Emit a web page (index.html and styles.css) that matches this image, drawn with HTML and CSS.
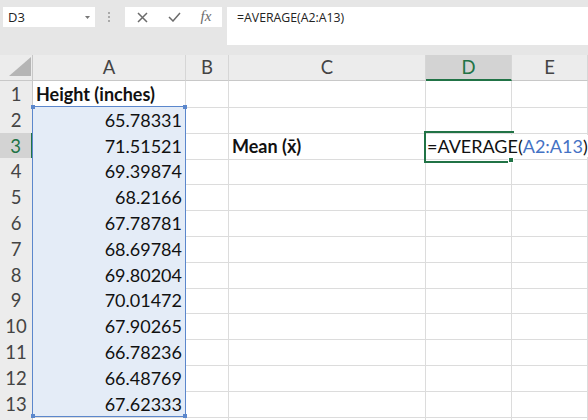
FILE: index.html
```html
<!DOCTYPE html>
<html>
<head>
  <title>Mean height</title>
  <link rel="stylesheet" href="styles.css">
</head>
<body>

  <div class="toolbar">
    <div class="name-box">
      <span>D3</span>
      <svg class="caret" width="5" height="3" viewBox="0 0 5 3"><path d="M0 0h5L2.5 3z"/></svg>
    </div>

    <div class="grip"><i></i><i></i><i></i></div>

    <div class="buttons">
      <span class="btn">
        <svg width="11" height="11" viewBox="0 0 11 11"><path d="M1 1l9 9M10 1l-9 9"/></svg>
      </span>
      <span class="btn">
        <svg width="13" height="10" viewBox="0 0 13 10"><path d="M1 5l4 4 7-8"/></svg>
      </span>
      <span class="btn fx">fx</span>
    </div>

    <div class="formula">=AVERAGE(A2:A13)</div>
  </div>

  <div class="sheet">

    <div class="row head">
      <div class="corner">
        <svg width="22" height="19" viewBox="0 0 22 19"><path d="M0 19H22V0z"/></svg>
      </div>
      <div class="col">A</div>
      <div class="col">B</div>
      <div class="col">C</div>
      <div class="col on">D</div>
      <div class="col">E</div>
    </div>

    <div class="row">
      <div class="num">1</div>
      <div class="cell bold">Height (inches)</div>
      <div class="cell"></div>
      <div class="cell"></div>
      <div class="cell"></div>
      <div class="cell"></div>
    </div>

    <div class="row">
      <div class="num">2</div>
      <div class="cell value ref">65.78331</div>
      <div class="cell"></div>
      <div class="cell"></div>
      <div class="cell"></div>
      <div class="cell"></div>
    </div>

    <div class="row">
      <div class="num on">3</div>
      <div class="cell value ref">71.51521</div>
      <div class="cell"></div>
      <div class="cell bold">Mean (x̄)</div>
      <div class="cell active">
        <span class="editor">=AVERAGE(<span class="ref-text">A2:A13</span>)</span>
        <i class="fill-handle"></i>
      </div>
      <div class="cell"></div>
    </div>

    <div class="row">
      <div class="num">4</div>
      <div class="cell value ref">69.39874</div>
      <div class="cell"></div>
      <div class="cell"></div>
      <div class="cell"></div>
      <div class="cell"></div>
    </div>

    <div class="row">
      <div class="num">5</div>
      <div class="cell value ref">68.2166</div>
      <div class="cell"></div>
      <div class="cell"></div>
      <div class="cell"></div>
      <div class="cell"></div>
    </div>

    <div class="row">
      <div class="num">6</div>
      <div class="cell value ref">67.78781</div>
      <div class="cell"></div>
      <div class="cell"></div>
      <div class="cell"></div>
      <div class="cell"></div>
    </div>

    <div class="row">
      <div class="num">7</div>
      <div class="cell value ref">68.69784</div>
      <div class="cell"></div>
      <div class="cell"></div>
      <div class="cell"></div>
      <div class="cell"></div>
    </div>

    <div class="row">
      <div class="num">8</div>
      <div class="cell value ref">69.80204</div>
      <div class="cell"></div>
      <div class="cell"></div>
      <div class="cell"></div>
      <div class="cell"></div>
    </div>

    <div class="row">
      <div class="num">9</div>
      <div class="cell value ref">70.01472</div>
      <div class="cell"></div>
      <div class="cell"></div>
      <div class="cell"></div>
      <div class="cell"></div>
    </div>

    <div class="row">
      <div class="num">10</div>
      <div class="cell value ref">67.90265</div>
      <div class="cell"></div>
      <div class="cell"></div>
      <div class="cell"></div>
      <div class="cell"></div>
    </div>

    <div class="row">
      <div class="num">11</div>
      <div class="cell value ref">66.78236</div>
      <div class="cell"></div>
      <div class="cell"></div>
      <div class="cell"></div>
      <div class="cell"></div>
    </div>

    <div class="row">
      <div class="num">12</div>
      <div class="cell value ref">66.48769</div>
      <div class="cell"></div>
      <div class="cell"></div>
      <div class="cell"></div>
      <div class="cell"></div>
    </div>

    <div class="row">
      <div class="num">13</div>
      <div class="cell value ref">67.62333</div>
      <div class="cell"></div>
      <div class="cell"></div>
      <div class="cell"></div>
      <div class="cell"></div>
    </div>

    <!-- next row, only its top sliver shows -->
    <div class="row">
      <div class="num"></div>
      <div class="cell"></div>
      <div class="cell"></div>
      <div class="cell"></div>
      <div class="cell"></div>
      <div class="cell"></div>
    </div>

    <!-- A2:A13 reference outline -->
    <div class="range">
      <i class="tl"></i><i class="tr"></i><i class="bl"></i><i class="br"></i>
    </div>

  </div>

</body>
</html>
```

FILE: styles.css
```css
* {
  box-sizing: border-box;
}

html, body {
  margin: 0;
  padding: 0;
  height: 100%;
  overflow: hidden;
}

body {
  background: #e6e6e6;
  font-family: Lato, 'Open Sans', sans-serif;
  color: #111;
}

/* formula bar */

.toolbar {
  display: flex;
  align-items: flex-start;
  height: 55px;
  padding: 7px 0 0 3px;
  font-family: 'Open Sans', sans-serif;
  font-size: 13px;
}

.name-box {
  width: 92px;
  height: 20px;
  background: #fff;
  display: flex;
  align-items: center;
  justify-content: space-between;
  padding: 0 5px;
  color: #222;
}

.caret {
  fill: #777;
}

.grip {
  width: 2px;
  height: 20px;
  margin-left: 13px;
  display: flex;
  flex-direction: column;
  justify-content: center;
  gap: 2px;
}

.grip i {
  display: block;
  width: 2px;
  height: 2px;
  background: #aaa;
}

.buttons {
  width: 97px;
  height: 20px;
  margin-left: 15px;
  background: #fff;
  display: flex;
  align-items: center;
  padding-left: 1px;
}

.btn {
  width: 32px;
  display: flex;
  justify-content: center;
  align-items: center;
}

.btn svg {
  fill: none;
  stroke: #6b6b6b;
  stroke-width: 1.5;
}

.fx {
  font-family: 'Liberation Serif', serif;
  font-style: italic;
  font-size: 15px;
  color: #6b6b6b;
  margin-top: -2px;
}

.formula {
  flex: 1;
  height: 38px;
  margin-left: 5px;
  background: #fff;
  padding: 2px 0 0 10px;
  font-size: 12.3px;
  color: #222;
}

/* grid */

.sheet {
  position: relative;
  background: #fff;
  height: 365px;
  overflow: hidden;
  font-size: 18px;
}

.row {
  display: grid;
  grid-template-columns: 33px 153px 43px 197px 86px 1fr;
  height: 25.8px;
}

.row.head {
  height: 26px;
}

.corner,
.col,
.num {
  background: #ececec;
  color: #444;
  font-size: 18.5px;
  text-align: center;
  line-height: 25px;
}

.corner {
  border-right: 1px solid #c8c8c8;
  border-bottom: 1px solid #c8c8c8;
  display: flex;
  align-items: flex-end;
  justify-content: flex-end;
  padding: 0 1px 4px 0;
}

.corner svg {
  fill: #b5b5b5;
}

.col {
  border-right: 1px solid #d6d6d6;
  border-bottom: 1px solid #c8c8c8;
}

.num {
  border-right: 1px solid #c8c8c8;
  border-bottom: 1px solid #d6d6d6;
  line-height: 26px;
}

.col.on {
  background: #d3d3d3;
  color: #217346;
  border-bottom: 2px solid #217346;
  line-height: 24px;
}

.num.on {
  background: #d3d3d3;
  color: #217346;
  border-right: 2px solid #217346;
}

.cell {
  border-right: 1px solid #dcdcdc;
  border-bottom: 1px solid #dcdcdc;
  padding: 1px 3px 0;
  line-height: 24px;
  white-space: nowrap;
}

.bold {
  font-weight: bold;
}

.value {
  text-align: right;
}

.ref {
  background: #e4ecf7;
}

.active {
  position: relative;
  z-index: 2;
  padding-left: 1px;
}

.active::before {
  content: '';
  position: absolute;
  top: -2px;
  left: -2px;
  width: 88px;
  height: 28px;
  border: 2px solid #217346;
  border-right: none;
}

.editor {
  position: relative;
  background: #fff;
  padding-right: 3px;
}

.ref-text {
  color: #4472c4;
}

.fill-handle {
  position: absolute;
  right: -3px;
  bottom: -4px;
  width: 6px;
  height: 6px;
  background: #217346;
  border: 1px solid #fff;
}

.range {
  position: absolute;
  left: 32px;
  top: 51px;
  width: 154px;
  height: 311px;
  border: 1px solid #5b87cc;
}

.range i {
  position: absolute;
  width: 4px;
  height: 4px;
  background: #5b87cc;
}

.range .tl { top: -2px; left: -2px; }
.range .tr { top: -2px; right: -2px; }
.range .bl { bottom: -2px; left: -2px; }
.range .br { bottom: -2px; right: -2px; }
```
